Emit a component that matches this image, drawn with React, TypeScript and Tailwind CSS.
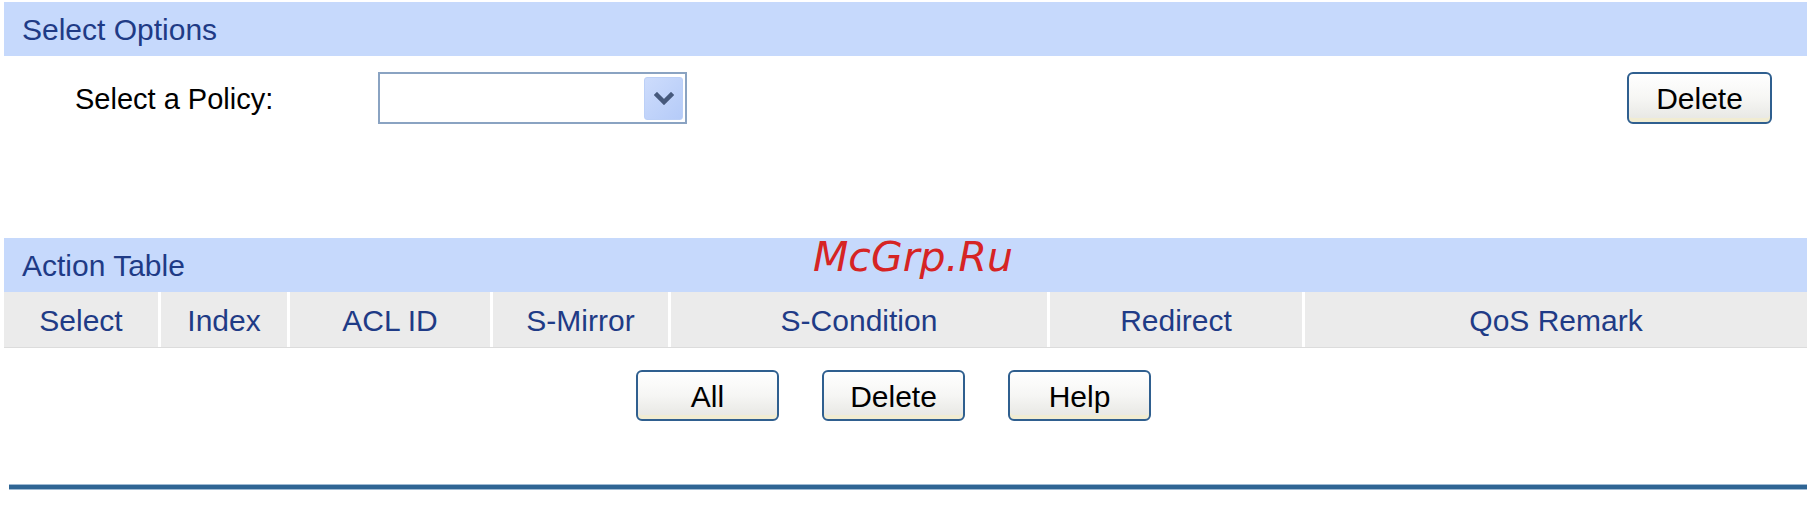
import React from 'react';

const labelFont = { fontFamily: '"Liberation Sans", Arial, sans-serif' };

interface ColumnDef {
  title: string;
  width: string;
}

const columns: ColumnDef[] = [
  { title: 'Select', width: 'w-[154px]' },
  { title: 'Index', width: 'w-[129px]' },
  { title: 'ACL ID', width: 'w-[203px]' },
  { title: 'S-Mirror', width: 'w-[178px]' },
  { title: 'S-Condition', width: 'w-[379px]' },
  { title: 'Redirect', width: 'w-[255px]' },
  { title: 'QoS Remark', width: 'flex-1' },
];

function SectionBar({ title }: { title: string }) {
  return (
    <div className="h-[54px] bg-[#c6d9fc] flex items-center pl-[18px] pt-[2px]">
      <span className="text-[30px] text-[#1f3b86] leading-none">{title}</span>
    </div>
  );
}

function XpButton({ label, className = '' }: { label: string; className?: string }) {
  return (
    <button
      className={`h-[51px] w-[143px] rounded-[6px] border-2 border-[#2f5f8f] bg-gradient-to-b from-[#ffffff] via-[#f6f6f4] to-[#e6e6e2] shadow-[inset_0_-4px_0_#f1ecd2] text-[30px] leading-none text-black pt-[2px] ${className}`}
      style={labelFont}
    >
      {label}
    </button>
  );
}

function PolicySelect() {
  return (
    <div className="w-[309px] h-[52px] border-2 border-[#8aa3c2] bg-white flex items-center justify-end pr-[2px]">
      <div className="w-[39px] h-[43px] rounded-[3px] bg-gradient-to-br from-[#cddcfc] to-[#b5cbf8] border border-[#bcd0f7] flex items-center justify-center">
        <svg width="20" height="13" viewBox="0 0 20 13">
          <path d="M3 3 L10 10 L17 3" fill="none" stroke="#46597c" strokeWidth="4.5" strokeLinecap="square" />
        </svg>
      </div>
    </div>
  );
}

export default function App() {
  return (
    <div className="relative w-[1813px] h-[510px] bg-white overflow-hidden" style={labelFont}>
      <div className="ml-[4px] w-[1803px] pt-[2px]">
        <SectionBar title="Select Options" />

        <div className="mt-[16px] h-[52px] flex items-center">
          <span className="ml-[71px] w-[303px] text-[29px] leading-none text-black pt-[3px]">Select a Policy:</span>
          <PolicySelect />
          <div className="flex-1" />
          <XpButton label="Delete" className="mr-[35px] w-[145px] h-[52px]" />
        </div>

        <div className="mt-[114px]">
          <SectionBar title="Action Table" />
        </div>

        {/* column headings of the action table */}
        <div className="h-[56px] flex bg-[#ebebeb] border-b border-[#dcdcdc]">
          {columns.map((col, i) => (
            <div
              key={col.title}
              className={`${col.width} flex items-center justify-center text-[30px] leading-none text-[#1f3b86] pt-[2px] ${i > 0 ? 'border-l-[3px] border-white' : ''}`}
            >
              {col.title}
            </div>
          ))}
        </div>

        <div className="mt-[22px] flex justify-center gap-[43px] pr-[24px]">
          <XpButton label="All" />
          <XpButton label="Delete" />
          <XpButton label="Help" />
        </div>
      </div>

      <div className="mt-[63px] ml-[9px] w-[1798px] h-[6px] bg-[#2f6594] border-y border-[#9fbad3]" />

      <span
        className="absolute left-[813px] top-[237px] text-[41px] leading-none italic text-[#d62424]"
        style={{ fontFamily: '"DejaVu Sans", sans-serif' }}
      >
        McGrp.Ru
      </span>
    </div>
  );
}
